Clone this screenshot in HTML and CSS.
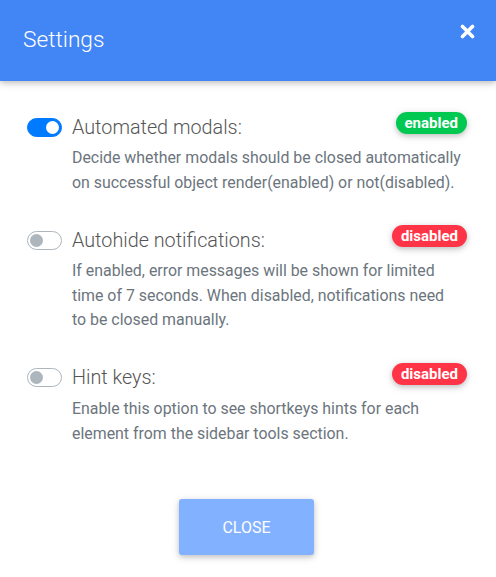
FILE: index.html
```html
<!DOCTYPE html>
<html>
<head>
<meta charset="utf-8">
<link rel="stylesheet" href="styles.css">
</head>
<body>
<div class="modal">
  <div class="modal-header">
    <h4 class="title">Settings</h4>
    <button class="x" aria-label="Close">
      <svg width="15" height="15" viewBox="0 0 15 15"><path d="M2.5 2.5 L12.5 12.5 M12.5 2.5 L2.5 12.5" stroke="#fff" stroke-width="3.6" stroke-linecap="round"/></svg>
    </button>
  </div>
  <div class="modal-body">
    <div class="setting">
      <div class="setting-head">
        <span class="switch on"><span class="knob"></span></span>
        <span class="label">Automated modals:</span>
        <span class="badge green">enabled</span>
      </div>
      <p class="desc">Decide whether modals should be closed automatically on successful object render(enabled) or not(disabled).</p>
    </div>
    <div class="setting">
      <div class="setting-head">
        <span class="switch"><span class="knob"></span></span>
        <span class="label">Autohide notifications:</span>
        <span class="badge red">disabled</span>
      </div>
      <p class="desc">If enabled, error messages will be shown for limited time of 7 seconds. When disabled, notifications need<br>to be closed manually.</p>
    </div>
    <div class="setting">
      <div class="setting-head">
        <span class="switch"><span class="knob"></span></span>
        <span class="label">Hint keys:</span>
        <span class="badge red">disabled</span>
      </div>
      <p class="desc">Enable this option to see shortkeys hints for each element from the sidebar tools section.</p>
    </div>
  </div>
  <div class="modal-footer">
    <button class="btn-close">CLOSE</button>
  </div>
</div>
</body>
</html>
```
FILE: styles.css
```css
* { box-sizing: border-box; }
html, body { margin: 0; padding: 0; background: #fff; }
body { font-family: Roboto, "Noto Sans", sans-serif; width: 496px; height: 577px; overflow: hidden; }
.modal { width: 496px; }
.modal-header {
  height: 81px;
  background: #4285f4;
  display: flex;
  align-items: flex-start;
  justify-content: space-between;
  padding: 0 21px 0 23px;
  box-shadow: 0 2px 5px rgba(0,0,0,.16), 0 2px 10px rgba(0,0,0,.12);
  position: relative;
}
.title { margin: 26px 0 0; font-size: 22.7px; font-weight: 300; color: #fff; line-height: 28px; }
.x { background: none; border: 0; padding: 0; margin-top: 24px; width: 15px; height: 15px; display: flex; cursor: pointer; }
.modal-body { padding: 34px 29px 0 27px; }
.setting { margin-bottom: 33px; }
.setting-head { display: flex; align-items: center; height: 24px; }
.switch {
  width: 35px; height: 19px; border-radius: 10px;
  border: 1px solid #adb5bd; background: #fff;
  position: relative; flex: none; margin-right: 10px;
}
.switch .knob {
  position: absolute; left: 2px; top: 2px; width: 13px; height: 13px; border-radius: 50%; background: #adb5bd;
}
.switch.on { background: #007bff; border-color: #007bff; }
.switch.on .knob { left: 18px; background: #fff; }
.label { font-size: 19.8px; font-weight: 300; color: #555; flex: 1; }
.badge {
  align-self: flex-start; margin-top: -3px;
  font-size: 15px; font-weight: 700; color: #fff; border-radius: 11px; height: 22px; line-height: 22px;
  padding: 0 9px; box-shadow: 0 2px 5px rgba(0,0,0,.16), 0 2px 10px rgba(0,0,0,.12);
}
.badge.green { background: #00c851; }
.badge.red { background: #ff3547; }
.desc { margin: 7px 0 0 45px; font-size: 15.9px; line-height: 24.6px; color: #6c757d; }
.modal-footer { display: flex; justify-content: center; padding-top: 20px; padding-right: 3px; }
.btn-close {
  width: 135px; height: 56px; background: #82b1ff; color: #fff; border: 0; border-radius: 3px;
  font-family: Roboto, sans-serif; font-size: 16px; font-weight: 400;
  box-shadow: 0 2px 5px rgba(0,0,0,.16), 0 2px 10px rgba(0,0,0,.12);
}
```
